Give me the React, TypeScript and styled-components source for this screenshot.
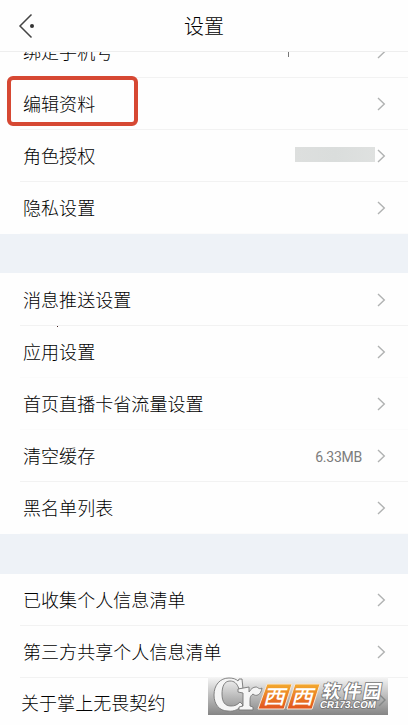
import React from "react";
import styled, { createGlobalStyle } from "styled-components";

const GlobalStyle = createGlobalStyle`
  * { box-sizing: border-box; }
  body {
    margin: 0;
    background: #fefefe;
    color: #000;
    font-family: Roboto, "Noto Sans CJK SC", sans-serif;
  }
`;

const Screen = styled.main`
  position: relative;
  display: flex;
  flex-direction: column;
  width: 408px;
  height: 725px;
  overflow: hidden;
  background: #fefefe;
`;

const Header = styled.header`
  display: grid;
  grid-template-columns: 60px 1fr 60px;
  align-items: center;
  flex: none;
  height: 52px;
  border-bottom: 1px solid #eeeeee;
`;

const BackButton = styled.button`
  display: flex;
  height: 51px;
  padding: 0 0 0 18px;
  border: 0;
  background: none;
  align-items: center;
`;

const Title = styled.h1`
  margin: 0;
  padding-top: 1px;
  font-family: "Noto Sans CJK SC", sans-serif;
  font-size: 20px;
  font-weight: 300;
  line-height: 30px;
  text-align: center;
`;

const Content = styled.div`
  flex: 1;
  min-height: 0;
  overflow: hidden;
`;

const Group = styled.section<{ $scrolled?: boolean; $inset?: boolean }>`
  margin-top: ${(p) => (p.$scrolled ? "-26px" : "0")};
  padding-top: ${(p) => (p.$inset ? "1px" : "0")};
`;

const Divider = styled.div<{ $height: number }>`
  height: ${(p) => p.$height}px;
  background: #eef2f7;
`;

const Row = styled.div<{ $shifted?: boolean }>`
  position: relative;
  display: flex;
  align-items: center;
  height: ${(p) => (p.$shifted ? "50px" : "52px")};
  margin-left: ${(p) => (p.$shifted ? "18px" : "20px")};
  padding: 0 22px 0 3px;
`;

const Line = styled.div<{ $faint?: boolean }>`
  height: 1px;
  margin: -1px 0 0 20px;
  background: ${(p) => (p.$faint ? "#fbfbfb" : "#f2f2f2")};
`;

const Label = styled.span`
  flex: 1;
  padding-bottom: 2px;
  font-family: "Noto Sans CJK SC", sans-serif;
  font-size: 18px;
  font-weight: 300;
  line-height: 26px;
  letter-spacing: 0.06px;
  white-space: nowrap;
`;

const Value = styled.span`
  margin-right: 15px;
  padding-top: 2px;
  color: #7c7c7c;
  font-size: 14px;
  letter-spacing: -0.25px;
  line-height: 20px;
`;

const Masked = styled.span`
  width: 80px;
  height: 15px;
  margin: -3px 2px 0 0;
  background: linear-gradient(90deg, #dddfde, #dadddc 50%, #dfe1e0);
`;

const PhoneTick = styled.span`
  width: 1px;
  height: 9px;
  margin-right: 88px;
  background: #777;
`;

const Highlight = styled.div`
  position: absolute;
  left: -13px;
  top: -2px;
  width: 131px;
  height: 50px;
  border: 4px solid #d64833;
  border-radius: 6px;
`;

const Speck = styled.i`
  position: absolute;
  left: 37px;
  bottom: -1px;
  width: 1px;
  height: 1px;
  background: #422;
`;

const Watermark = styled.div`
  position: absolute;
  left: 208px;
  top: 677px;
  width: 180px;
  height: 38px;
`;

const Chevron = () => (
  <svg width="9" height="14" viewBox="0 0 9 14" fill="none">
    <path d="M1 1l6.3 6L1 13" stroke="#b0b2b2" strokeWidth="1.4" />
  </svg>
);

type Item = {
  label: string;
  value?: React.ReactNode;
  highlighted?: boolean;
  shifted?: boolean;
  faint?: boolean;
  speck?: boolean;
};

const account: Item[] = [
  { label: "绑定手机号", value: <PhoneTick /> },
  { label: "编辑资料", highlighted: true },
  { label: "角色授权", value: <Masked /> },
  { label: "隐私设置", faint: true },
];
const app: Item[] = [
  { label: "消息推送设置", speck: true },
  { label: "应用设置", faint: true },
  { label: "首页直播卡省流量设置", faint: true },
  { label: "清空缓存", value: <Value>6.33MB</Value> },
  { label: "黑名单列表", faint: true },
];
const about: Item[] = [
  { label: "已收集个人信息清单" },
  { label: "第三方共享个人信息清单" },
  { label: "关于掌上无畏契约", shifted: true, faint: true },
];

const Rows = ({ items }: { items: Item[] }) => (
  <>
    {items.map((item) => (
      <React.Fragment key={item.label}>
        <Row $shifted={item.shifted}>
          {item.highlighted && <Highlight />}
          <Label>{item.label}</Label>
          {item.value}
          {!item.shifted && <Chevron />}
          {item.speck && <Speck />}
        </Row>
        <Line $faint={item.faint} />
      </React.Fragment>
    ))}
  </>
);

const SiteMark = () => (
  <svg width="180" height="38" viewBox="0 0 180 38">
    <defs>
      <linearGradient id="plate" x1="0" y1="0" x2="0" y2="1">
        <stop offset="0" stopColor="#f6f6f6" />
        <stop offset="0.5" stopColor="#bcbcbc" />
        <stop offset="1" stopColor="#858585" />
      </linearGradient>
      <linearGradient id="tile" x1="0" y1="0" x2="0" y2="1">
        <stop offset="0" stopColor="#f3aa2e" />
        <stop offset="1" stopColor="#e2531d" />
      </linearGradient>
    </defs>
    <rect width="180" height="38" fill="url(#plate)" />
    <path d="M171 17l6 6-6 6" fill="none" stroke="#858888" strokeWidth="1.4" />
    <g strokeLinejoin="round" fill="#f5f5f5" stroke="#777" strokeWidth="0.9">
      <path d="M34 2L35 12L31 12C29 6 26 4 22 4C16 4 14 10 14 17C14 25 17 29 23 29C27 29 29 28 32 25L35 28C31 32 26 35 20 34C11 34 6 27 6 18C6 8 12 1 21 1C25 1 28 2 30 4L31 2Z" />
      <path d="M30 12L41 10V15C43 12 45 10 48 10C50 10 51 13 54 11C53 18 48 20 45 17C42 19 42 21 42 25V29L45 30V33H31V30L35 29V16L30 15Z" />
    </g>
    <g fill="url(#tile)" stroke="#f8e7d6" strokeWidth="1">
      <path d="M59 7H84L76 32H50Z" />
      <path d="M87 7H112L104 32H79Z" />
    </g>
    <g fontFamily="Noto Sans CJK SC, sans-serif" fontWeight="700" fill="#fff">
      <g transform="skewX(-15)" fontSize="20" fontWeight="500">
        <text x="62" y="27" textLength="22" lengthAdjust="spacingAndGlyphs">西</text>
        <text x="90" y="27" textLength="22" lengthAdjust="spacingAndGlyphs">西</text>
      </g>
      <g transform="skewX(-10)" stroke="#757575" strokeWidth="1.6" paintOrder="stroke">
        <text x="117" y="20.5" fontSize="18.5" textLength="59">软件园</text>
        <text x="117" y="31.5" fontFamily="Liberation Sans, sans-serif" fontSize="10" textLength="56" lengthAdjust="spacingAndGlyphs">CR173.COM</text>
      </g>
    </g>
  </svg>
);

export default function App() {
  return (
    <>
      <GlobalStyle />
      <Screen>
        <Header>
          <BackButton aria-label="返回">
            <svg width="18" height="26" viewBox="0 0 18 26">
              <path d="M13.5 1.5L2 13L13.5 24.5" fill="none" stroke="#444" strokeWidth="1.5" />
              <circle cx="14" cy="13" r="2" fill="#333" />
            </svg>
          </BackButton>
          <Title>设置</Title>
        </Header>
        <Content>
          <Group $scrolled><Rows items={account} /></Group>
          <Divider $height={39} />
          <Group $inset><Rows items={app} /></Group>
          <Divider $height={40} />
          <Group><Rows items={about} /></Group>
        </Content>
        <Watermark><SiteMark /></Watermark>
      </Screen>
    </>
  );
}
